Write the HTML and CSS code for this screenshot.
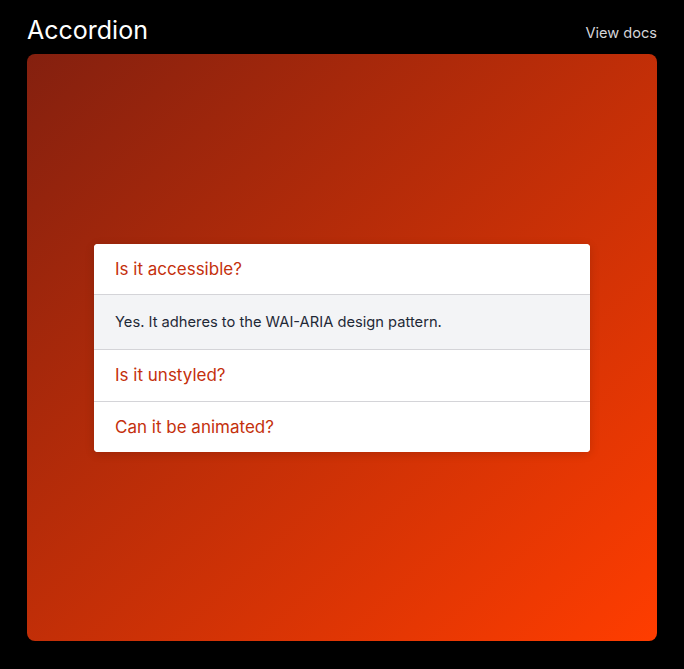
FILE: index.html
```html
<!DOCTYPE html>
<html lang="en">
<head>
<meta charset="utf-8">
<title>Accordion</title>
<link rel="stylesheet" href="styles.css">
</head>
<body>
<div class="page">
  <header class="top">
    <h1 class="title">Accordion</h1>
    <a class="docs" href="#">View docs</a>
  </header>
  <div class="stage">
    <div class="accordion">
      <div class="item">
        <button class="trigger">Is it accessible?</button>
        <div class="content">Yes. It adheres to the WAI-ARIA design pattern.</div>
      </div>
      <div class="item">
        <button class="trigger tall">Is it unstyled?</button>
      </div>
      <div class="item">
        <button class="trigger">Can it be animated?</button>
      </div>
    </div>
  </div>
</div>
</body>
</html>
```
FILE: styles.css
```css
html, body {
  margin: 0;
  padding: 0;
  background: #000;
  font-family: Inter, "Noto Sans", sans-serif;
}
.page {
  width: 630px;
  padding: 0 27px;
}
.top {
  display: flex;
  align-items: flex-end;
  justify-content: space-between;
  height: 46px;
  padding-bottom: 8px;
}
.title {
  margin: 0;
  font-size: 25px;
  font-weight: 400;
  color: #fff;
  line-height: 30px;
  padding-bottom: 1px;
}
.docs {
  color: #d4d4d8;
  text-decoration: none;
  font-size: 14.6px;
  line-height: 20px;
  padding-bottom: 3px;
}
.stage {
  height: 587px;
  border-radius: 8px;
  background: linear-gradient(to bottom right, #84200f, #ff3d00);
  display: flex;
  align-items: center;
  justify-content: center;
}
.accordion {
  width: 496px;
  background: #fff;
  border-radius: 4px;
  box-shadow: 0 2px 10px rgba(0,0,0,0.15);
  overflow: hidden;
}
.item + .item {
  border-top: 1px solid #d4d4d8;
}
.trigger {
  display: flex;
  align-items: center;
  width: 100%;
  height: 50px;
  padding: 0 21px;
  margin: 0;
  border: 0;
  background: #fff;
  font-family: inherit;
  font-size: 17px;
  font-weight: 400;
  color: #c4300c;
  text-align: left;
  box-sizing: border-box;
}
.trigger.tall {
  height: 51px;
}
.content {
  border-top: 1px solid #d4d4d8;
  background: #f3f4f6;
  color: #1f2937;
  font-size: 14.7px;
  height: 54px;
  padding: 0 21px;
  display: flex;
  align-items: center;
}
```
